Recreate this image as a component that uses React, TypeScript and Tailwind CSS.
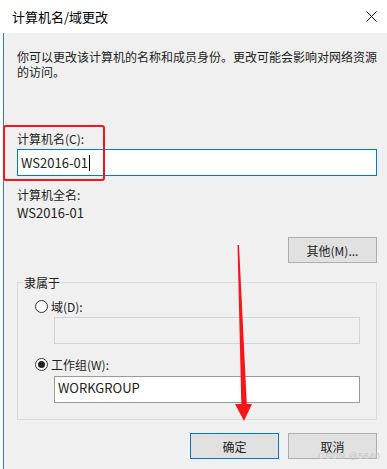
const font = { fontFamily: '"Noto Sans CJK SC", "Noto Sans", sans-serif' }

const Radio = ({ checked }: { checked?: boolean }) => (
  <span className="flex h-[13px] w-[13px] items-center justify-center rounded-full border border-[#333] bg-white">
    {checked && <span className="h-[7px] w-[7px] rounded-full bg-[#222]" />}
  </span>
)

const App = () => {
  return (
    <div
      className="relative flex h-[469px] w-[387px] flex-col overflow-hidden bg-white text-[12px] leading-[15px] text-[#222]"
      style={font}
    >
      {/* title bar */}
      <div className="flex h-[33px] items-center justify-between pl-[12px] pr-[9px]">
        <span className="text-[13px] text-black">计算机名/域更改</span>
        <svg width="11" height="11" viewBox="0 0 11 11" className="mr-[1px]">
          <path d="M0.5 0.5 L10.5 10.5 M10.5 0.5 L0.5 10.5" stroke="#111" strokeWidth="1" />
        </svg>
      </div>

      {/* body */}
      <div className="ml-[3px] flex flex-1 flex-col border-l border-[#2b7bd6] bg-[#f0f0f0] pl-[13px] pr-[10px] pt-[16px]">
        <p className="whitespace-nowrap leading-[15px]">
          你可以更改该计算机的名称和成员身份。更改可能会影响对网络资源
          <br />
          的访问。
        </p>

        <label className="mt-[52px]">计算机名(C):</label>
        <div className="mt-[3px] flex h-[27px] items-center border border-[#0078d7] bg-white pl-[3px] text-[13px]">
          WS2016-01
          <span className="ml-[1px] h-[16px] w-[1px] bg-black" />
        </div>

        <div className="mt-[11px]">计算机全名:</div>
        <div className="mt-[3px] text-[13px]">WS2016-01</div>

        <div className="mt-[17px] flex justify-end">
          <button className="h-[26px] w-[89px] border border-[#adadad] bg-[#e1e1e1] text-[12px]">
            其他(M)...
          </button>
        </div>

        <fieldset className="mt-[12px] h-[145px] w-[360px] border border-[#dcdcdc] px-0 pb-0">
          <legend className="ml-[5px] px-[1px] leading-[15px]">隶属于</legend>
          <div className="mt-[9px] flex items-center gap-[3px] pl-[17px]">
            <Radio />
            <span>域(D):</span>
          </div>
          <div className="ml-[36px] mt-[3px] h-[27px] w-[306px] border border-[#d4d4d4] bg-[#f0f0f0]" />
          <div className="mt-[13px] flex items-center gap-[3px] pl-[17px]">
            <Radio checked />
            <span>工作组(W):</span>
          </div>
          <div className="ml-[36px] mt-[4px] flex h-[27px] w-[306px] items-start border border-[#9a9a9a] bg-white pl-[3px] pt-[3px] text-[13px]">
            WORKGROUP
          </div>
        </fieldset>

        <div className="mt-[13px] flex justify-end gap-[9px]">
          <button className="h-[26px] w-[89px] border border-[#0078d7] bg-[#e1e1e1] text-[12px]">确定</button>
          <button className="h-[26px] w-[89px] border border-[#adadad] bg-[#e1e1e1] text-[12px]">取消</button>
        </div>
      </div>

      {/* red annotation box */}
      <div className="absolute left-[3px] top-[125px] h-[56px] w-[102px] rounded-[3px] border-2 border-[#f5161b]" />

      {/* red arrow */}
      <svg className="pointer-events-none absolute left-0 top-0" width="387" height="469">
        <polygon
          points="237.5,245 239,245 246.8,404 252,404 244,421 235,404 241.3,404"
          fill="#f5161b"
        />
      </svg>

      {/* watermark */}
      <span className="absolute left-[318px] top-[451px] text-[9px] leading-[10px] tracking-[0.5px] text-[#c8c8c8]" style={{ fontFamily: '"Liberation Sans", sans-serif' }}>
        CSDN @5640
      </span>
    </div>
  )
}

export default App
